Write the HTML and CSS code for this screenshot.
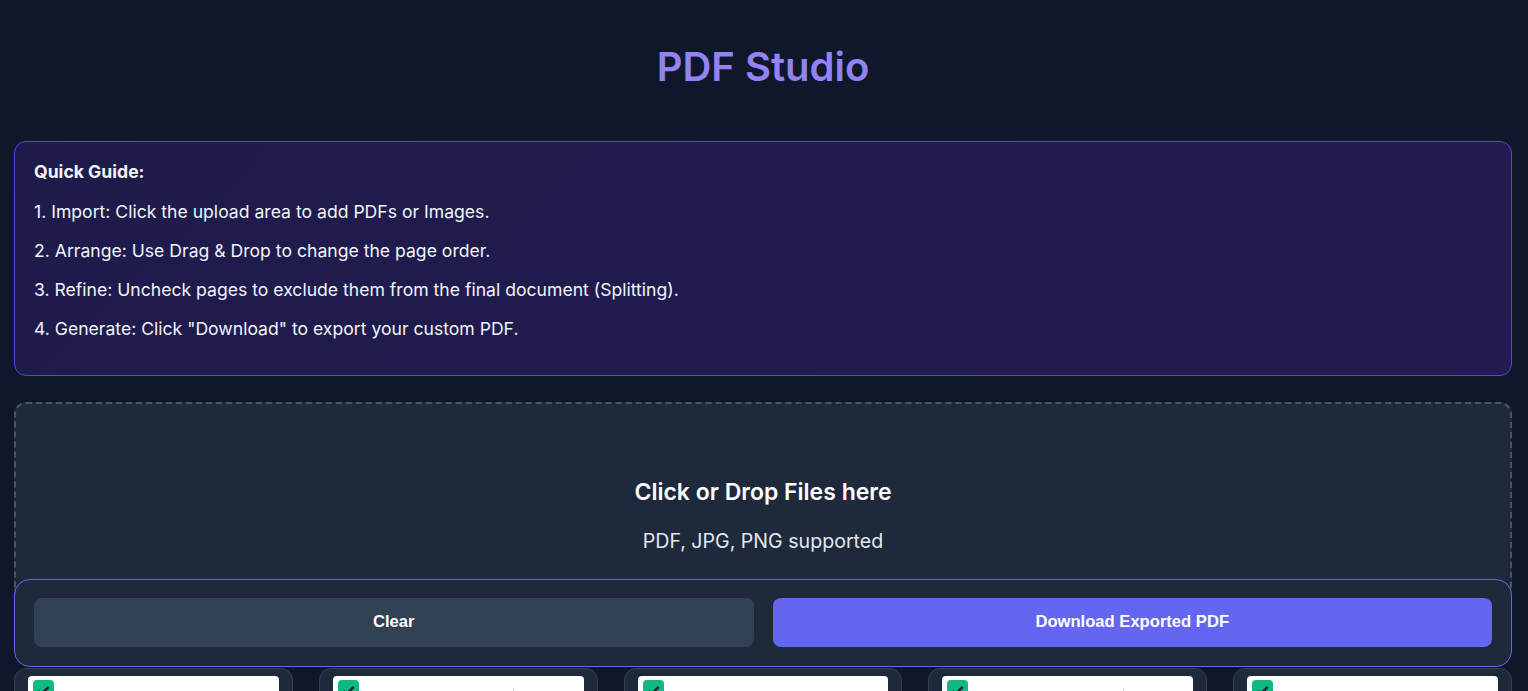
FILE: index.html
```html
<!DOCTYPE html>
<html lang="en">
<head>
  <meta charset="UTF-8">
  <meta name="viewport" content="width=device-width, initial-scale=1.0">
  <title>PDF Studio</title>
  <link rel="stylesheet" href="styles.css">
</head>
<body>
  <div class="app">
    <h1 class="title">PDF Studio</h1>

    <!-- Guide -->
    <div class="guide">
      <p><strong>Quick Guide:</strong></p>
      <p>1. Import: Click the upload area to add PDFs or Images.</p>
      <p>2. Arrange: Use Drag &amp; Drop to change the page order.</p>
      <p>3. Refine: Uncheck pages to exclude them from the final document (Splitting).</p>
      <p>4. Generate: Click "Download" to export your custom PDF.</p>
    </div>

    <!-- Upload area -->
    <div class="dropZone">
      <h3>Click or Drop Files here</h3>
      <p>PDF, JPG, PNG supported</p>
    </div>

    <!-- Toolbar, floats over the bottom of the upload area -->
    <div class="toolbar">
      <button class="btn btnClear">Clear</button>
      <button class="btn btnDownload">Download Exported PDF</button>
    </div>

    <!-- Pages -->
    <div class="pageGrid">
      <div class="pageCard">
        <div class="thumb"><span class="check"><svg viewBox="0 0 20 20"><path d="M5 10.5l3 3 7-7"/></svg></span></div>
      </div>
      <div class="pageCard">
        <div class="thumb"><span class="check"><svg viewBox="0 0 20 20"><path d="M5 10.5l3 3 7-7"/></svg></span><span class="rule"></span></div>
      </div>
      <div class="pageCard">
        <div class="thumb"><span class="check"><svg viewBox="0 0 20 20"><path d="M5 10.5l3 3 7-7"/></svg></span></div>
      </div>
      <div class="pageCard">
        <div class="thumb"><span class="check"><svg viewBox="0 0 20 20"><path d="M5 10.5l3 3 7-7"/></svg></span><span class="rule"></span></div>
      </div>
      <div class="pageCard">
        <div class="thumb"><span class="check"><svg viewBox="0 0 20 20"><path d="M5 10.5l3 3 7-7"/></svg></span></div>
      </div>
    </div>
  </div>
</body>
</html>
```

FILE: styles.css
```css
body {
  margin: 0;
  padding: 0;
  font-family: Inter, "Noto Sans", sans-serif;
  background-color: #0f172a;
  color: #f1f5f9;
}

.app {
  padding: 0 16px 40px 14px;
}

.title {
  text-align: center;
  color: #9282f2;
  font-size: 40px;
  font-weight: 600;
  margin: 0;
  padding: 43px 0 50px;
  line-height: 48px;
}

/* Guide */
.guide {
  background: linear-gradient(135deg, #1e1b4b, #231c52);
  border: 1px solid #4f46e5;
  border-radius: 12px;
  padding: 3px 19px 18px;
  font-size: 17.6px;
  margin-bottom: 26px;
}

.guide p {
  margin: 15.3px 0;
  line-height: 24px;
}

/* Upload area */
.dropZone {
  background-color: #1e293b;
  border: 2px dashed #475569;
  border-radius: 12px;
  text-align: center;
  padding: 74px 20px 60px;
}

.dropZone h3 {
  font-size: 23px;
  font-weight: 600;
  margin: 0 0 21px;
  line-height: 28px;
  color: #fff;
}

.dropZone p {
  font-size: 19.6px;
  margin: 0;
  line-height: 28px;
  color: #e2e8f0;
}

/* Toolbar */
.toolbar {
  position: relative;
  display: flex;
  gap: 19px;
  padding: 18px 19px 19px;
  background-color: #1e293b;
  border: 1px solid #6366f1;
  border-radius: 16px;
  margin-top: -38px;
}

.btn {
  flex: 1;
  height: 49px;
  border: none;
  border-radius: 8px;
  color: #fff;
  font-family: "Liberation Sans", Arial, sans-serif;
  font-size: 16.6px;
  font-weight: bold;
  cursor: pointer;
}

.btnClear {
  background-color: #334155;
}

.btnDownload {
  background-color: #6366f1;
}

/* Pages */
.pageGrid {
  display: grid;
  grid-template-columns: repeat(5, 1fr);
  gap: 26px;
  margin-top: 1px;
}

.pageCard {
  background-color: #1e293b;
  border: 1px solid #334155;
  border-radius: 12px;
  padding: 7px 13px;
  height: 380px;
}

.thumb {
  background-color: #fff;
  border-radius: 4px;
  height: 360px;
  position: relative;
}

.check {
  position: absolute;
  top: 4px;
  left: 5px;
  width: 21px;
  height: 21px;
  background-color: #10b981;
  border-radius: 4px;
  display: flex;
}

.check svg {
  width: 21px;
  height: 21px;
  fill: none;
  stroke: #1e293b;
  stroke-width: 2.5;
}

.rule {
  position: absolute;
  left: 72%;
  top: 12px;
  width: 1px;
  height: 40px;
  background-color: #d4d4d8;
}
```
